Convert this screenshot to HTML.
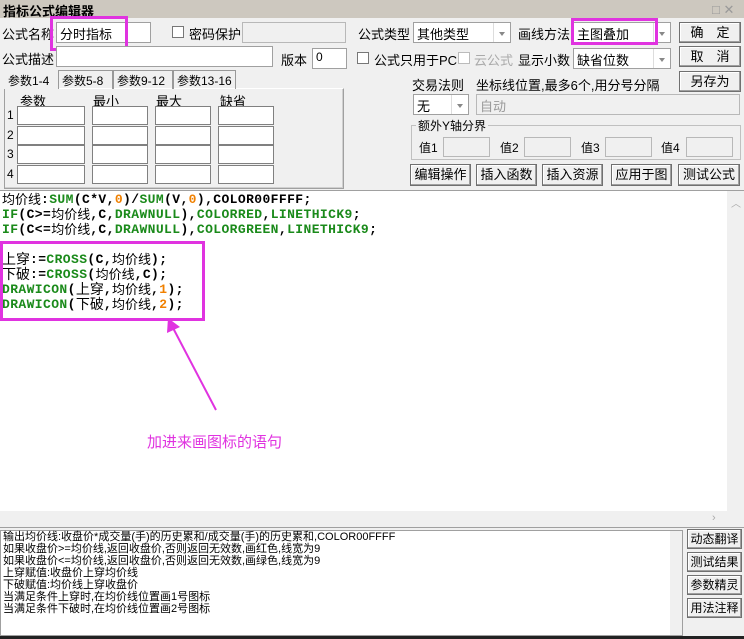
<!DOCTYPE html>
<html><head><meta charset="utf-8">
<style>
*{margin:0;padding:0;box-sizing:border-box}
body{width:744px;height:639px;position:relative;overflow:hidden;background:#f0f0f0;font-family:"Liberation Sans","Noto Sans CJK SC","WenQuanYi Zen Hei",sans-serif;font-size:12px;color:#000}
.a{position:absolute;white-space:nowrap}
.in{position:absolute;background:#fff;border:1px solid #a0a0a0}
.dis{position:absolute;background:#f0f0f0;border:1px solid #b8b8b8}
.btn{position:absolute;background:#f0f0f0;border:1px solid #707070;box-shadow:inset -1px -1px 0 #a0a0a0,inset 1px 1px 0 #fff;text-align:center;font-size:13px}
.dd{position:absolute;right:0;top:0;bottom:0;width:17px;border-left:1px solid #ddd;background:#fff}
.dd:after{content:"";position:absolute;left:5px;top:9px;border:3px solid transparent;border-top:4px solid #888}
.cb{position:absolute;width:12px;height:12px;border:1px solid #777;background:#fff}
.mag{position:absolute;border:3px solid #e033e0}
.code{position:absolute;left:2px;font-family:"Liberation Mono","Noto Sans CJK SC",monospace;font-size:13px;font-weight:bold;line-height:15px;white-space:pre;letter-spacing:0.4px}
.code span{line-height:15px;display:inline-block;height:15px;vertical-align:top}
.g{color:#1a8a1a}.o{color:#f08000}.k{color:#000;font-weight:normal;font-family:"Liberation Sans","Noto Sans CJK SC",sans-serif;letter-spacing:0}
.cell{position:absolute;background:#fff;border:1px solid #808080;width:68px;height:19px}
</style></head><body>
<div class="a" style="left:0;top:0;width:744px;height:18px;background:#cdc8bf"></div>
<div class="a" style="left:3px;top:1px;font-size:13px;font-weight:bold">指标公式编辑器</div>
<div class="a" style="left:712px;top:2px;color:#999;font-size:13px">□ ✕</div>

<div class="a" style="left:2px;top:24px;font-size:13px">公式名称</div>
<div class="in" style="left:56px;top:22px;width:95px;height:21px"></div>
<div class="a" style="left:60px;top:24px;font-size:13px">分时指标</div>
<div class="mag" style="left:50px;top:16px;width:78px;height:35px"></div>
<div class="cb" style="left:172px;top:26px"></div>
<div class="a" style="left:189px;top:24px;font-size:13px">密码保护</div>
<div class="dis" style="left:242px;top:22px;width:104px;height:21px"></div>
<div class="a" style="left:358px;top:24px;font-size:13px">公式类型</div>
<div class="in" style="left:413px;top:22px;width:98px;height:21px"><div class="dd"></div></div>
<div class="a" style="left:417px;top:24px;font-size:13px">其他类型</div>
<div class="a" style="left:518px;top:24px;font-size:13px">画线方法</div>
<div class="in" style="left:573px;top:22px;width:98px;height:21px"><div class="dd"></div></div>
<div class="a" style="left:577px;top:24px;font-size:13px">主图叠加</div>
<div class="mag" style="left:571px;top:18px;width:87px;height:27px"></div>
<div class="btn" style="left:679px;top:22px;width:62px;height:21px;line-height:19px">确　定</div>

<div class="a" style="left:2px;top:49px;font-size:13px">公式描述</div>
<div class="in" style="left:56px;top:46px;width:217px;height:21px"></div>
<div class="a" style="left:281px;top:50px;font-size:13px">版本</div>
<div class="in" style="left:312px;top:48px;width:35px;height:21px"></div>
<div class="a" style="left:316px;top:50px">0</div>
<div class="cb" style="left:357px;top:52px"></div>
<div class="a" style="left:374px;top:50px;font-size:13px">公式只用于PC</div>
<div class="cb" style="left:458px;top:52px;border-color:#bbb"></div>
<div class="a" style="left:474px;top:50px;font-size:13px;color:#aaa">云公式</div>
<div class="a" style="left:518px;top:50px;font-size:13px">显示小数</div>
<div class="in" style="left:573px;top:48px;width:98px;height:21px"><div class="dd"></div></div>
<div class="a" style="left:577px;top:50px;font-size:13px">缺省位数</div>
<div class="btn" style="left:679px;top:46px;width:62px;height:21px;line-height:19px">取　消</div>

<div class="a" style="left:412px;top:75px;font-size:13px">交易法则</div>
<div class="a" style="left:476px;top:75px;font-size:13px">坐标线位置,最多6个,用分号分隔</div>
<div class="btn" style="left:679px;top:71px;width:62px;height:21px;line-height:19px">另存为</div>
<div class="in" style="left:413px;top:94px;width:56px;height:21px"><div class="dd"></div></div>
<div class="a" style="left:417px;top:96px;font-size:13px">无</div>
<div class="dis" style="left:476px;top:94px;width:264px;height:21px"></div>
<div class="a" style="left:480px;top:96px;font-size:13px;color:#999">自动</div>
<div class="a" style="left:411px;top:125px;width:330px;height:35px;border:1px solid #c0c0c0"></div>
<div class="a" style="left:416px;top:117px;background:#f0f0f0;padding:0 2px;font-size:12px">额外Y轴分界</div>
<div class="a" style="left:419px;top:139px">值1</div><div class="dis" style="left:443px;top:137px;width:47px;height:20px"></div>
<div class="a" style="left:500px;top:139px">值2</div><div class="dis" style="left:524px;top:137px;width:47px;height:20px"></div>
<div class="a" style="left:581px;top:139px">值3</div><div class="dis" style="left:605px;top:137px;width:47px;height:20px"></div>
<div class="a" style="left:661px;top:139px">值4</div><div class="dis" style="left:686px;top:137px;width:47px;height:20px"></div>
<div class="btn" style="left:410px;top:164px;width:61px;height:22px;line-height:20px">编辑操作</div>
<div class="btn" style="left:476px;top:164px;width:61px;height:22px;line-height:20px">插入函数</div>
<div class="btn" style="left:542px;top:164px;width:61px;height:22px;line-height:20px">插入资源</div>
<div class="btn" style="left:611px;top:164px;width:61px;height:22px;line-height:20px">应用于图</div>
<div class="btn" style="left:678px;top:164px;width:62px;height:22px;line-height:20px">测试公式</div>

<div class="a" style="left:4px;top:88px;width:340px;height:101px;border:1px solid #a0a0a0;border-top:1px solid #fff;box-shadow:inset -1px -1px 0 #d0d0d0"></div>
<div class="a" style="left:2px;top:70px;width:56px;height:19px;background:#f0f0f0"></div>
<div class="a" style="left:8px;top:72px">参数1-4</div>
<div class="a" style="left:58px;top:70px;width:55px;height:19px;border:1px solid #999;border-bottom:none;padding:1px 3px">参数5-8</div>
<div class="a" style="left:113px;top:70px;width:60px;height:19px;border:1px solid #999;border-bottom:none;padding:1px 3px">参数9-12</div>
<div class="a" style="left:173px;top:70px;width:63px;height:19px;border:1px solid #999;border-bottom:none;padding:1px 3px">参数13-16</div>
<div class="a" style="left:20px;top:91px;font-size:13px">参数</div>
<div class="a" style="left:93px;top:91px;font-size:13px">最小</div>
<div class="a" style="left:156px;top:91px;font-size:13px">最大</div>
<div class="a" style="left:220px;top:91px;font-size:13px">缺省</div>
<div class="a" style="left:7px;top:108px">1</div><div class="a" style="left:7px;top:128px">2</div><div class="a" style="left:7px;top:147px">3</div><div class="a" style="left:7px;top:167px">4</div>
<div class="cell" style="left:17px;top:106px"></div><div class="cell" style="left:92px;top:106px;width:56px"></div><div class="cell" style="left:155px;top:106px;width:56px"></div><div class="cell" style="left:218px;top:106px;width:56px"></div>
<div class="cell" style="left:17px;top:126px"></div><div class="cell" style="left:92px;top:126px;width:56px"></div><div class="cell" style="left:155px;top:126px;width:56px"></div><div class="cell" style="left:218px;top:126px;width:56px"></div>
<div class="cell" style="left:17px;top:145px"></div><div class="cell" style="left:92px;top:145px;width:56px"></div><div class="cell" style="left:155px;top:145px;width:56px"></div><div class="cell" style="left:218px;top:145px;width:56px"></div>
<div class="cell" style="left:17px;top:165px"></div><div class="cell" style="left:92px;top:165px;width:56px"></div><div class="cell" style="left:155px;top:165px;width:56px"></div><div class="cell" style="left:218px;top:165px;width:56px"></div>

<!-- editor -->
<div class="a" style="left:0;top:190px;width:744px;height:338px;background:#fff;border-top:1px solid #a0a0a0"></div>
<div class="a" style="left:727px;top:191px;width:17px;height:320px;background:#f0f0f0"></div>
<div class="a" style="left:731px;top:195px;color:#aaa;font-size:10px">︿</div>
<div class="a" style="left:0;top:511px;width:744px;height:17px;background:#f0f0f0;border-bottom:1px solid #a0a0a0"></div>
<div class="a" style="left:712px;top:512px;color:#aaa;font-size:11px">›</div>
<div class="code" style="top:192px"><span class="k">均价线</span>:<span class="g">SUM</span>(C*V,<span class="o">0</span>)/<span class="g">SUM</span>(V,<span class="o">0</span>),COLOR00FFFF;
<span class="g">IF</span>(C&gt;=<span class="k">均价线</span>,C,<span class="g">DRAWNULL</span>),<span class="g">COLORRED</span>,<span class="g">LINETHICK9</span>;
<span class="g">IF</span>(C&lt;=<span class="k">均价线</span>,C,<span class="g">DRAWNULL</span>),<span class="g">COLORGREEN</span>,<span class="g">LINETHICK9</span>;

<span class="k" style="font-size:14px">上穿</span>:=<span class="g">CROSS</span>(C,<span class="k">均价线</span>);
<span class="k" style="font-size:14px">下破</span>:=<span class="g">CROSS</span>(<span class="k">均价线</span>,C);
<span class="g">DRAWICON</span>(<span class="k" style="font-size:14px">上穿</span>,<span class="k">均价线</span>,<span class="o">1</span>);
<span class="g">DRAWICON</span>(<span class="k" style="font-size:14px">下破</span>,<span class="k">均价线</span>,<span class="o">2</span>);</div>
<div class="mag" style="left:0;top:241px;width:205px;height:80px"></div>
<svg class="a" style="left:0;top:0" width="744" height="639"><line x1="216" y1="410" x2="172" y2="326" stroke="#e033e0" stroke-width="2"/><polygon points="168,318 167,333 180,327" fill="#e033e0"/></svg>
<div class="a" style="left:147px;top:431px;font-size:15px;color:#e033e0">加进来画图标的语句</div>

<!-- bottom -->
<div class="a" style="left:0;top:530px;width:683px;height:106px;background:#fff;border:1px solid #a0a0a0"></div>
<div class="a" style="left:670px;top:531px;width:12px;height:104px;background:#f0f0f0"></div>
<div class="a" style="left:3px;top:531px;font-size:11px;line-height:12px;white-space:pre;font-family:'Liberation Sans','WenQuanYi Zen Hei',sans-serif">输出均价线:收盘价*成交量(手)的历史累和/成交量(手)的历史累和,COLOR00FFFF
如果收盘价&gt;=均价线,返回收盘价,否则返回无效数,画红色,线宽为9
如果收盘价&lt;=均价线,返回收盘价,否则返回无效数,画绿色,线宽为9
上穿赋值:收盘价上穿均价线
下破赋值:均价线上穿收盘价
当满足条件上穿时,在均价线位置画1号图标
当满足条件下破时,在均价线位置画2号图标</div>
<div class="btn" style="left:687px;top:529px;width:55px;height:20px;line-height:18px;font-size:12px">动态翻译</div>
<div class="btn" style="left:687px;top:552px;width:55px;height:20px;line-height:18px;font-size:12px">测试结果</div>
<div class="btn" style="left:687px;top:575px;width:55px;height:20px;line-height:18px;font-size:12px">参数精灵</div>
<div class="btn" style="left:687px;top:598px;width:55px;height:20px;line-height:18px;font-size:12px">用法注释</div>
<div class="a" style="left:0;top:636px;width:744px;height:3px;background:#222"></div>
</body></html>
